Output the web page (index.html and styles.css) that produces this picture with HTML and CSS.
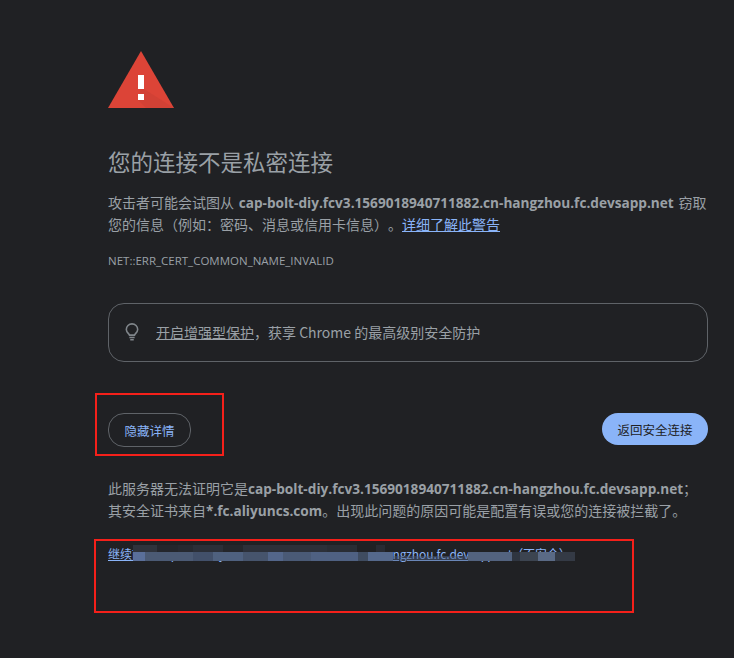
FILE: index.html
```html
<!DOCTYPE html>
<html lang="zh-CN">
<head>
  <meta charset="UTF-8">
  <title>隐私设置错误</title>
  <link rel="stylesheet" href="styles.css">
</head>
<body>
  <main class="interstitial">
    <svg class="warning-icon" width="66" height="57" viewBox="0 0 66 57">
      <polygon points="33,0 66,57 0,57" fill="#dc4437"/>
      <polygon points="36,24 36,38 66,57 38,57 30,49" fill="#c63d32" opacity="0.45"/>
      <rect x="30" y="24" width="6" height="14" fill="#fff"/>
      <rect x="30" y="43" width="6" height="6" fill="#fff"/>
    </svg>

    <h1>您的连接不是私密连接</h1>
    <p class="message">攻击者可能会试图从 <strong>cap-bolt-diy.fcv3.1569018940711882.cn-hangzhou.fc.devsapp.net</strong> 窃取您的信息（例如：密码、消息或信用卡信息）。<a href="#">详细了解此警告</a></p>
    <div class="error-code">NET::ERR_CERT_COMMON_NAME_INVALID</div>

    <div class="promo">
      <svg class="bulb" width="14" height="18" viewBox="0 0 16 20" fill="none" stroke="#80868b" stroke-width="1.800">
        <path d="M5.200 13.600c0-1.500-3.700-2.700-3.700-6.400a6.500 6.500 0 0 1 13 0c0 3.700-3.700 4.900-3.700 6.400z"/>
        <path d="M5 16.200h6M6 18.800h4"/>
      </svg>
      <span><a href="#">开启增强型保护</a>，获享 Chrome 的最高级别安全防护</span>
    </div>

    <div class="buttons">
      <button class="btn-details">隐藏详情</button>
      <button class="btn-back">返回安全连接</button>
    </div>

    <p class="details">此服务器无法证明它是<strong>cap-bolt-diy.fcv3.1569018940711882.cn-hangzhou.fc.devsapp.net</strong>；其安全证书来自<strong>*.fc.aliyuncs.com</strong>。出现此问题的原因可能是配置有误或您的连接被拦截了。</p>
    <p class="proceed"><a href="#">继续前往 cap-bolt-diy.fcv3.1569018940711882.cn-hangzhou.fc.devs<span class="tail">app.net</span>（不安全）</a></p>
  </main>

  <!-- 打码 -->
  <div class="mosaic mosaic-top"></div>
  <div class="mosaic mosaic-main"></div>
  <div class="mosaic mosaic-thin"></div>
  <div class="mosaic mosaic-end"></div>

  <!-- 红框标注 -->
  <div class="mark mark-details"></div>
  <div class="mark mark-proceed"></div>
</body>
</html>
```

FILE: styles.css
```css
body {
  margin: 0;
  background: #202124;
  color: #9aa0a6;
  font-family: "Noto Sans CJK SC", "Open Sans", sans-serif;
  font-size: 14px;
  text-spacing-trim: space-all;
}
.interstitial {
  width: 600px;
  margin-left: 108px;
  padding-top: 51px;
}
.warning-icon {
  display: block;
}
h1 {
  margin: 38px 0 0;
  font-size: 22.500px;
  font-weight: 400;
  line-height: 30px;
}
p {
  margin: 0;
}
strong {
  font-family: "Open Sans", "Noto Sans CJK SC", sans-serif;
  font-weight: 700;
  font-size: 13.640px;
  line-height: 1;
  white-space: nowrap;
}
a {
  color: #8ab4f8;
}
.message {
  margin-top: 15px;
  line-height: 22px;
  word-spacing: 1.500px;
}
.error-code {
  margin-top: 16px;
  font-family: "Open Sans", sans-serif;
  font-size: 11.500px;
  line-height: 20px;
}
.promo {
  display: flex;
  align-items: center;
  gap: 17px;
  height: 55px;
  margin-top: 32px;
  padding: 0 0 2px 16px;
  border: 1px solid #5f6368;
  border-radius: 16px;
}
.promo a {
  color: #9aa0a6;
}
.buttons {
  display: flex;
  justify-content: space-between;
  align-items: flex-start;
  margin-top: 51px;
}
button {
  height: 32px;
  border-radius: 16px;
  font-family: inherit;
  font-size: 12.500px;
  padding: 0;
}
.btn-details {
  width: 83px;
  height: 34px;
  background: transparent;
  border: 1px solid #5f6368;
  color: #8ab4f8;
}
.btn-back {
  width: 106px;
  border: none;
  background: #8ab4f8;
  color: #202124;
}
.details {
  margin-top: 30px;
  line-height: 22px;
}
.proceed {
  margin-top: 23px;
  font-size: 12px;
  line-height: 20px;
  letter-spacing: -0.1px;
}
.tail {
  letter-spacing: -1px;
}
.mosaic {
  position: absolute;
}
.mosaic-top {
  left: 133px;
  top: 545px;
  width: 260px;
  height: 7px;
  background: linear-gradient(to right, #2f333c 0 24px, #24262c 24px 45px, #262930 45px 60px, #2b2f38 60px 90px, #24262b 90px 110px, #2c3039 110px 194px, #292d34 194px 224px, #202124 224px 243px, #282b33 243px 252px, #202124 252px 260px);
}
.mosaic-main {
  left: 133px;
  top: 552px;
  width: 260px;
  height: 9px;
  background: linear-gradient(to right, #5a6f9a 0 12px, #4b5a74 12px 60px, #42506a 60px 80px, #4f617f 80px 110px, #46546c 110px 135px, #53668a 135px 150px, #4a5a76 150px 178px, #4f6182 178px 225px, #3f4c60 225px 235px, #55698c 235px 260px);
}
.mosaic-thin {
  left: 393px;
  top: 556px;
  width: 76px;
  height: 5px;
  background: #4a5a78;
  opacity: 0.5;
}
.mosaic-end {
  left: 468px;
  top: 552px;
  width: 107px;
  height: 9px;
  background: linear-gradient(to right, #53637f 0 44px, #2f3540 44px 52px, #3c4450 52px 70px, #5a6a85 70px 87px, #343a45 87px 107px);
}
.mark {
  position: absolute;
  border: 2px solid #f5201a;
  box-sizing: border-box;
}
.mark-details {
  left: 95px;
  top: 393px;
  width: 129px;
  height: 63px;
}
.mark-proceed {
  left: 94px;
  top: 539px;
  width: 540px;
  height: 74px;
}
```
